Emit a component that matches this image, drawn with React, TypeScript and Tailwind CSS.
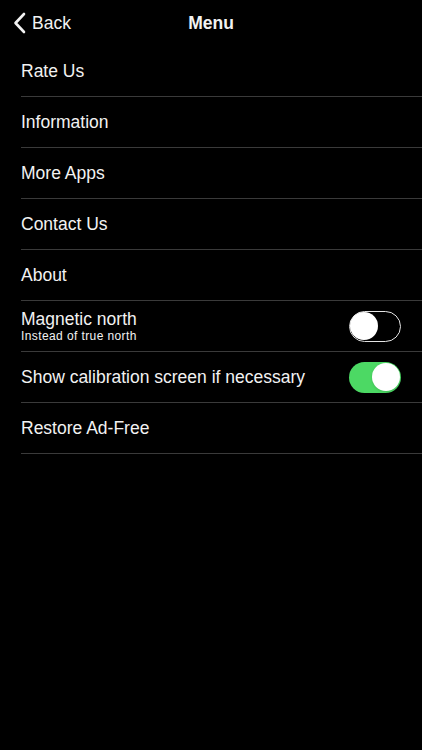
import { useState } from "react";

const ITEMS = ["Rate Us", "Information", "More Apps", "Contact Us", "About"];

function Toggle({ on, onChange }: { on: boolean; onChange: () => void }) {
  return (
    <button
      onClick={onChange}
      className={`relative h-[31px] w-[52px] shrink-0 rounded-full ${
        on ? "bg-[#4cd964]" : "border-[1.5px] border-[#e5e5e5] bg-black"
      }`}
    >
      <span
        className={`absolute top-1/2 h-[28px] w-[28px] -translate-y-1/2 rounded-full bg-white shadow ${
          on ? "right-[1.5px]" : "left-[0px]"
        }`}
      />
    </button>
  );
}

export default function App() {
  const [magnetic, setMagnetic] = useState(false);
  const [calib, setCalib] = useState(true);

  return (
    <div className="h-[750px] w-full bg-black font-['Liberation_Sans',Arial,sans-serif] text-[#f2f2f2]">
      <div className="relative flex h-[46px] items-center">
        <button className="flex items-center gap-[6px] pl-[13px] text-[17.5px]">
          <svg width="13" height="22" viewBox="0 0 13 22" fill="none">
            <path d="M11 2 L2.5 11 L11 20" stroke="#f2f2f2" strokeWidth="2.6" strokeLinecap="round" strokeLinejoin="round" />
          </svg>
          <span>Back</span>
        </button>
        <div className="absolute left-1/2 -translate-x-1/2 text-[17.5px] font-bold">Menu</div>
      </div>

      <div className="pl-[21px]">
        {ITEMS.map((item) => (
          <div key={item} className="flex h-[51px] items-center border-b border-[#3a3a3a] text-[17.5px]">
            {item}
          </div>
        ))}
        <div className="flex h-[51px] items-center justify-between border-b border-[#3a3a3a] pr-[21px]">
          <div className="flex flex-col pt-[1px]">
            <span className="text-[17.5px] leading-[19px]">Magnetic north</span>
            <span className="text-[12px] leading-[14px] tracking-[0.4px]">Instead of true north</span>
          </div>
          <Toggle on={magnetic} onChange={() => setMagnetic(!magnetic)} />
        </div>
        <div className="flex h-[51px] items-center justify-between border-b border-[#3a3a3a] pr-[21px]">
          <span className="text-[17.5px]">Show calibration screen if necessary</span>
          <Toggle on={calib} onChange={() => setCalib(!calib)} />
        </div>
        <div className="flex h-[51px] items-center border-b border-[#3a3a3a] text-[17.5px]">Restore Ad-Free</div>
      </div>
    </div>
  );
}
